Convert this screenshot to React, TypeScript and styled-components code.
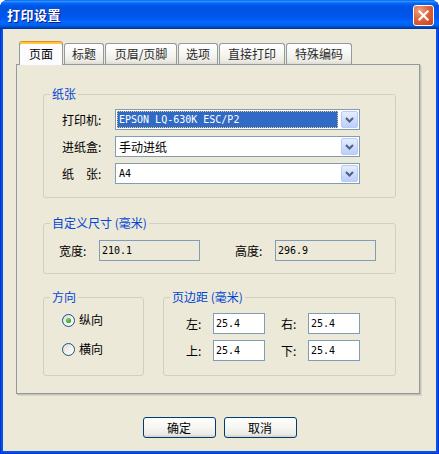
import styled, { createGlobalStyle } from 'styled-components';

const GlobalStyle = createGlobalStyle`
  html, body {
    margin: 0;
    padding: 0;
    background: #ffffff;
  }
  body {
    font-family: "Noto Sans CJK SC", "Noto Sans", sans-serif;
    font-size: 12px;
  }
`;

const Window = styled.div`
  width: 439px;
  height: 454px;
  box-sizing: border-box;
  display: flex;
  flex-direction: column;
  background: #0055e5;
  border-radius: 8px 8px 0 0;
  overflow: hidden;
  box-shadow: inset 1px 0 #0831d9, inset -1px 0 #0831d9, inset 0 -1px #0831d9;
`;

const TitleBar = styled.div`
  height: 29px;
  flex: none;
  display: flex;
  align-items: flex-start;
  justify-content: space-between;
  padding: 0 5px 0 7px;
  box-sizing: border-box;
  background: linear-gradient(
    180deg,
    #0058ee 0%,
    #3593ff 4%,
    #288eff 6%,
    #127dff 8%,
    #036ffc 10%,
    #0262ee 14%,
    #0057e5 20%,
    #0054e3 24%,
    #0055eb 56%,
    #005bf5 66%,
    #026afe 76%,
    #0062ef 86%,
    #0052d6 92%,
    #0040ab 96%,
    #003092 100%
  );
`;

const Title = styled.span`
  color: #ffffff;
  font-weight: bold;
  font-size: 13px;
  line-height: 14px;
  margin-top: 8px;
  letter-spacing: 0.5px;
  text-shadow: 1px 1px #0a1883;
`;

const CloseBtn = styled.div`
  width: 21px;
  height: 21px;
  margin-top: 5px;
  box-sizing: border-box;
  border: 1px solid #ffffff;
  border-radius: 3px;
  background: radial-gradient(circle at 30% 25%, #f0a080 0%, #e0643c 45%, #c4401a 100%);
  display: flex;
  align-items: center;
  justify-content: center;
`;

const Client = styled.div`
  flex: 1;
  margin: 0 3px 3px;
  background: #ece9d8;
  display: flex;
  flex-direction: column;
  padding-top: 12px;
`;

const TabRow = styled.div`
  display: flex;
  align-items: flex-end;
  margin-left: 16px;
  height: 23px;
`;

const Tab = styled.div<{ $active?: boolean; $w: number }>`
  position: relative;
  z-index: ${(p) => (p.$active ? 2 : 1)};
  box-sizing: border-box;
  width: ${(p) => p.$w}px;
  height: ${(p) => (p.$active ? 24 : 21)}px;
  margin-right: 1px;
  margin-bottom: ${(p) => (p.$active ? -1 : 0)}px;
  display: flex;
  align-items: center;
  justify-content: center;
  font-size: 12px;
  line-height: 14px;
  color: ${(p) => (p.$active ? '#000000' : '#2b2b2b')};
  border: 1px solid #919b9c;
  border-bottom: none;
  border-radius: 3px 3px 0 0;
  border-top-color: ${(p) => (p.$active ? '#e68b2c' : '#919b9c')};
  background: ${(p) =>
    p.$active
      ? '#fcfcfe'
      : 'linear-gradient(180deg, #ffffff 0%, #f7f7f4 45%, #ecebe5 85%, #dcdad0 100%)'};
  box-shadow: ${(p) => (p.$active ? 'inset 0 2px #ffc83c' : 'none')};
  padding-top: ${(p) => (p.$active ? 1 : 0)}px;
`;

const Panel = styled.div`
  width: 404px;
  height: 330px;
  margin-left: 13px;
  box-sizing: border-box;
  border: 1px solid #919b9c;
  box-shadow: 1px 1px 0 #c5c2b2, 2px 2px 0 #dad7c8;
  padding: 22px 23px 0 26px;
  display: flex;
  flex-direction: column;
`;

const Group = styled.fieldset<{ $w?: number; $top?: number }>`
  margin: ${(p) => p.$top ?? 0}px 0 0;
  padding: 0;
  min-width: 0;
  width: ${(p) => (p.$w ? `${p.$w}px` : 'auto')};
  box-sizing: border-box;
  border: 1px solid #d0d0bf;
  border-radius: 3px;
`;

const Legend = styled.legend`
  margin-left: 6px;
  padding: 0 2px;
  font-size: 12px;
  line-height: 14px;
  color: #0046d5;
`;

const PaperBody = styled.div`
  display: grid;
  grid-template-columns: 53px 245px;
  grid-auto-rows: 21px;
  row-gap: 6px;
  align-items: center;
  padding: 8px 0 13px 18px;
`;

const SizeBody = styled.div`
  display: grid;
  grid-template-columns: 40px 101px 35px 40px 101px;
  grid-auto-rows: 21px;
  align-items: center;
  padding: 10px 0 12px 15px;
`;

const BottomRow = styled.div`
  display: flex;
  gap: 19px;
  margin-top: 16px;
`;

const OrientBody = styled.div`
  display: flex;
  flex-direction: column;
  gap: 9px;
  padding: 6px 0 16px 18px;
`;

const MarginBody = styled.div`
  display: grid;
  grid-template-columns: 27px 52px 16px 27px 52px;
  grid-auto-rows: 21px;
  row-gap: 6px;
  align-items: center;
  padding: 9px 0 14px 22px;
`;

const Label = styled.span`
  font-size: 12px;
  line-height: 14px;
  color: #000000;
  white-space: pre;
`;

const Combo = styled.div`
  height: 21px;
  box-sizing: border-box;
  border: 1px solid #7f9db9;
  background: #ffffff;
  padding: 1px;
  display: flex;
  align-items: stretch;
`;

const ComboValue = styled.div<{ $selected?: boolean; $cjk?: boolean }>`
  flex: 1;
  display: flex;
  align-items: center;
  padding-left: 2px;
  margin-right: 3px;
  color: ${(p) => (p.$selected ? '#ffffff' : '#000000')};
  background: ${(p) => (p.$selected ? '#316ac5' : 'transparent')};
  outline: ${(p) => (p.$selected ? '1px dotted #f0d070' : 'none')};
  outline-offset: -1px;
  font-family: ${(p) =>
    p.$cjk ? '"Noto Sans CJK SC", sans-serif' : '"DejaVu Sans Mono", "Noto Sans CJK SC", monospace'};
  font-size: ${(p) => (p.$cjk ? 12 : 10)}px;
`;

const DropBtn = styled.div`
  width: 17px;
  flex: none;
  box-sizing: border-box;
  border: 1px solid #b9cbf3;
  border-radius: 2px;
  background: linear-gradient(180deg, #e6eefc 0%, #d2dffb 45%, #bccff9 100%);
  display: flex;
  align-items: center;
  justify-content: center;
`;

const TextBox = styled.div<{ $readOnly?: boolean }>`
  height: 21px;
  box-sizing: border-box;
  border: 1px solid #7f9db9;
  background: ${(p) => (p.$readOnly ? '#ece9d8' : '#ffffff')};
  display: flex;
  align-items: center;
  padding-left: 2px;
  font-family: "DejaVu Sans Mono", monospace;
  font-size: 10px;
  color: #000000;
`;

const RadioRow = styled.label`
  display: flex;
  align-items: center;
  gap: 4px;
  height: 20px;
  font-size: 12px;
  line-height: 14px;
  color: #000000;
`;

const RadioCircle = styled.span<{ $checked?: boolean }>`
  width: 13px;
  height: 13px;
  box-sizing: border-box;
  border-radius: 50%;
  border: 1px solid #1c5180;
  background: linear-gradient(135deg, #dcdcd5 0%, #f2f2ee 55%, #ffffff 100%);
  display: flex;
  align-items: center;
  justify-content: center;
  &::after {
    content: '';
    display: ${(p) => (p.$checked ? 'block' : 'none')};
    width: 5px;
    height: 5px;
    border-radius: 50%;
    background: radial-gradient(circle at 40% 35%, #7be07b 0%, #2aa72a 60%, #1a8a1a 100%);
  }
`;

const ButtonRow = styled.div`
  display: flex;
  justify-content: center;
  gap: 8px;
  margin-top: 23px;
`;

const Button = styled.div`
  width: 73px;
  height: 21px;
  box-sizing: border-box;
  border: 1px solid #003c74;
  border-radius: 3px;
  background: linear-gradient(180deg, #ffffff 0%, #f6f6f2 50%, #ecebe5 85%, #d6d0c5 100%);
  display: flex;
  align-items: center;
  justify-content: center;
  font-size: 12px;
  line-height: 14px;
  color: #000000;
`;

const Chevron = () => (
  <svg width="9" height="6" viewBox="0 0 9 6">
    <path d="M1 1 L4.5 4.5 L8 1" fill="none" stroke="#4d6185" strokeWidth="2" />
  </svg>
);

const CloseX = () => (
  <svg width="13" height="13" viewBox="0 0 13 13">
    <path d="M2.5 2.5 L10.5 10.5 M10.5 2.5 L2.5 10.5" stroke="#ffffff" strokeWidth="2.2" strokeLinecap="square" />
  </svg>
);

const tabs = [
  { name: '页面', w: 44 },
  { name: '标题', w: 40 },
  { name: '页眉/页脚', w: 72 },
  { name: '选项', w: 40 },
  { name: '直接打印', w: 66 },
  { name: '特殊编码', w: 66 },
];

const App = () => {
  return (
    <>
      <GlobalStyle />
      <Window>
        <TitleBar>
          <Title>{'打印设置'}</Title>
          <CloseBtn>
            <CloseX />
          </CloseBtn>
        </TitleBar>
        <Client>
          <TabRow>
            {tabs.map((t, i) => (
              <Tab key={t.name} $w={t.w} $active={i === 0}>
                {t.name}
              </Tab>
            ))}
          </TabRow>
          <Panel>
            <Group>
              <Legend>{'纸张'}</Legend>
              <PaperBody>
                <Label>{'打印机:'}</Label>
                <Combo>
                  <ComboValue $selected>{'EPSON LQ-630K ESC/P2'}</ComboValue>
                  <DropBtn>
                    <Chevron />
                  </DropBtn>
                </Combo>
                <Label>{'进纸盒:'}</Label>
                <Combo>
                  <ComboValue $cjk>{'手动进纸'}</ComboValue>
                  <DropBtn>
                    <Chevron />
                  </DropBtn>
                </Combo>
                <Label>{'纸　张:'}</Label>
                <Combo>
                  <ComboValue>{'A4'}</ComboValue>
                  <DropBtn>
                    <Chevron />
                  </DropBtn>
                </Combo>
              </PaperBody>
            </Group>

            <Group $top={18}>
              <Legend>{'自定义尺寸 (毫米)'}</Legend>
              <SizeBody>
                <Label>{'宽度:'}</Label>
                <TextBox $readOnly>{'210.1'}</TextBox>
                <span />
                <Label>{'高度:'}</Label>
                <TextBox $readOnly>{'296.9'}</TextBox>
              </SizeBody>
            </Group>

            <BottomRow>
              <Group $w={101}>
                <Legend>{'方向'}</Legend>
                <OrientBody>
                  <RadioRow>
                    <RadioCircle $checked />
                    {'纵向'}
                  </RadioRow>
                  <RadioRow>
                    <RadioCircle />
                    {'横向'}
                  </RadioRow>
                </OrientBody>
              </Group>
              <Group $w={233}>
                <Legend>{'页边距 (毫米)'}</Legend>
                <MarginBody>
                  <Label>{'左:'}</Label>
                  <TextBox>{'25.4'}</TextBox>
                  <span />
                  <Label>{'右:'}</Label>
                  <TextBox>{'25.4'}</TextBox>
                  <Label>{'上:'}</Label>
                  <TextBox>{'25.4'}</TextBox>
                  <span />
                  <Label>{'下:'}</Label>
                  <TextBox>{'25.4'}</TextBox>
                </MarginBody>
              </Group>
            </BottomRow>
          </Panel>
          <ButtonRow>
            <Button>{'确定'}</Button>
            <Button>{'取消'}</Button>
          </ButtonRow>
        </Client>
      </Window>
    </>
  );
};

export default App;
